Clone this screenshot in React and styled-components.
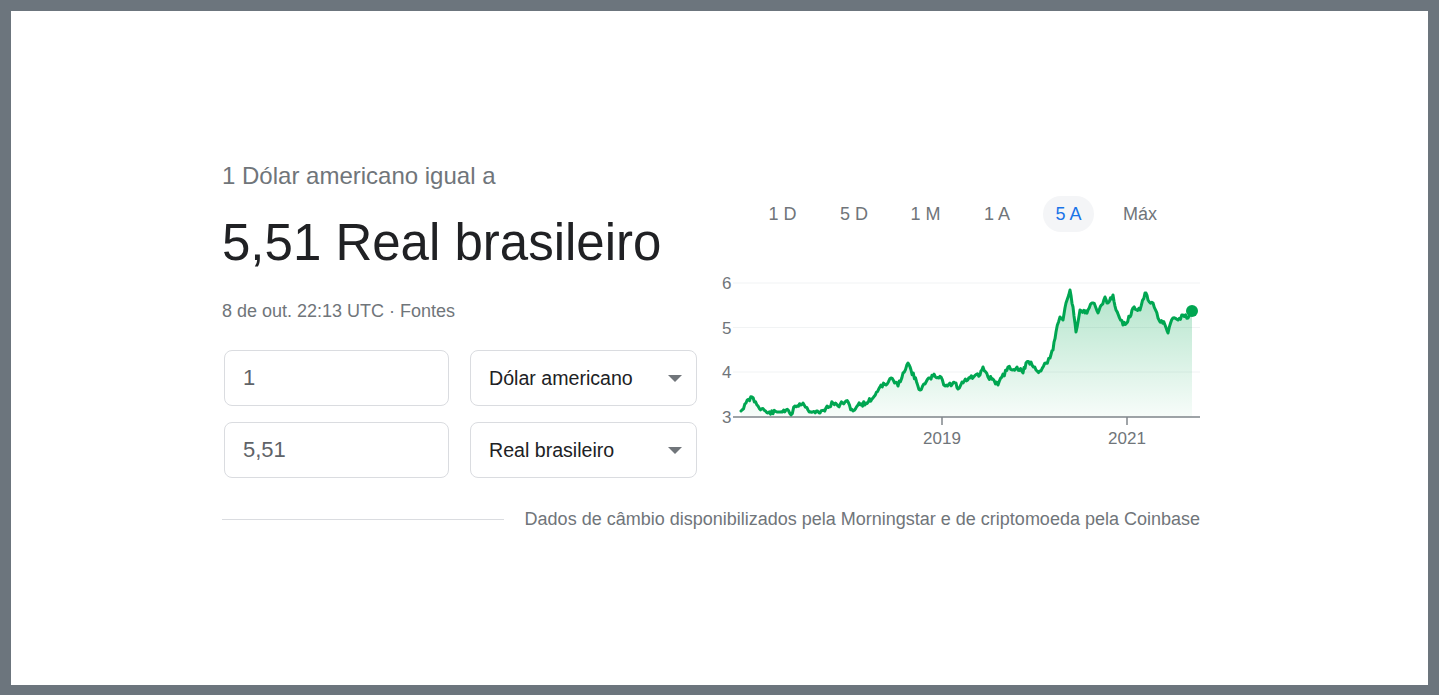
import React from 'react';
import styled, { createGlobalStyle } from 'styled-components';

const GlobalStyle = createGlobalStyle`
  html, body {
    margin: 0;
    padding: 0;
    background: #6c757d;
  }
  body {
    font-family: "Liberation Sans", Arial, sans-serif;
  }
`;

const Frame = styled.div`
  box-sizing: border-box;
  height: 695px;
  padding: 11px 11px 10px 11px;
  background: #6c757d;
`;

const Page = styled.div`
  height: 100%;
  background: #ffffff;
  padding: 151px 0 0 211px;
  box-sizing: border-box;
`;

const Card = styled.div`
  width: 978px;
`;

const TopRow = styled.div`
  display: flex;
  align-items: flex-start;
`;

const LeftCol = styled.div`
  width: 478px;
  flex: none;
`;

const Label = styled.div`
  font-size: 24px;
  line-height: 28px;
  color: #70757a;
`;

const BigValue = styled.div`
  margin-top: 23px;
  font-size: 51px;
  line-height: 60px;
  color: #202124;
  white-space: nowrap;
`;

const Meta = styled.div`
  margin-top: 27px;
  font-size: 18px;
  line-height: 22px;
  color: #70757a;
`;

const Converter = styled.div`
  margin-top: 28px;
  padding-left: 2px;
  display: grid;
  grid-template-columns: 225px 227px;
  grid-auto-rows: 56px;
  gap: 16px 21px;
`;

const Field = styled.div`
  box-sizing: border-box;
  border: 1px solid #dadce0;
  border-radius: 8px;
  display: flex;
  align-items: center;
  padding: 0 14px 0 18px;
  font-size: ${p => (p.select ? '19.6px' : '22px')};
  color: ${p => (p.select ? '#202124' : '#5f6368')};
  justify-content: space-between;
  white-space: nowrap;
`;

const Caret = styled.span`
  width: 0;
  height: 0;
  border-left: 7px solid transparent;
  border-right: 7px solid transparent;
  border-top: 7px solid #70757a;
`;

const ChartCol = styled.div`
  width: 500px;
  margin-top: 34px;
`;

const Tabs = styled.div`
  display: flex;
  gap: 20.5px;
  padding-left: 57px;
`;

const Tab = styled.div`
  width: 51px;
  height: 36px;
  border-radius: 18px;
  display: flex;
  align-items: center;
  justify-content: center;
  font-size: 18px;
  color: ${p => (p.active ? '#1a73e8' : '#70757a')};
  background: ${p => (p.active ? '#f4f5f7' : 'transparent')};
  white-space: nowrap;
`;

const ChartSvg = styled.svg`
  display: block;
  margin-top: 38px;
  overflow: visible;
`;

const Footer = styled.div`
  margin-top: 30px;
  display: flex;
  align-items: center;
  gap: 21px;
`;

const Rule = styled.div`
  flex: 1;
  height: 1px;
  background: #dadce0;
`;

const Source = styled.div`
  font-size: 18px;
  line-height: 22px;
  color: #70757a;
  white-space: nowrap;
`;

const KEY = [
  [741, 411], [746, 403], [752, 397], [758, 406], [768, 413], [778, 412], [786, 410], [791, 415],
  [795, 406], [803, 403], [808, 410], [820, 413], [833, 403], [838, 406], [846, 401], [853, 411],
  [858, 405], [866, 403], [873, 398], [881, 385], [886, 385], [891, 378], [898, 386], [903, 373],
  [908, 363], [911, 370], [920, 390], [930, 378], [933, 376], [941, 377], [945, 386], [956, 383],
  [958, 389], [962, 382], [970, 378], [980, 375], [983, 367], [988, 377], [993, 379], [998, 385],
  [1008, 367], [1012, 370], [1017, 367], [1023, 373], [1026, 363], [1031, 362], [1036, 370],
  [1041, 371], [1046, 363], [1050, 358], [1053, 350], [1056, 332], [1060, 317], [1063, 320],
  [1066, 303], [1070, 290], [1073, 307], [1076, 332], [1080, 310], [1085, 313], [1088, 310],
  [1093, 303], [1098, 313], [1105, 297], [1108, 303], [1113, 295], [1116, 310], [1123, 325],
  [1130, 317], [1133, 308], [1140, 310], [1145, 293], [1148, 300], [1153, 303], [1158, 318],
  [1165, 325], [1168, 333], [1173, 318], [1178, 320], [1183, 315], [1188, 318], [1192, 311],
];

// small seeded jitter so the line looks like daily prices
function buildLine() {
  let seed = 11;
  const rnd = () => {
    seed = (seed * 9301 + 49297) % 233280;
    return seed / 233280;
  };
  const pts = [];
  for (let i = 0; i < KEY.length - 1; i++) {
    const [x0, y0] = KEY[i];
    const [x1, y1] = KEY[i + 1];
    const steps = Math.max(1, Math.round((x1 - x0) / 1.2));
    for (let s = 0; s < steps; s++) {
      const t = s / steps;
      const jitter = s === 0 ? 0 : (rnd() - 0.5) * 4.5;
      pts.push([x0 + (x1 - x0) * t - 700, y0 + (y1 - y0) * t + jitter - 270]);
    }
  }
  const last = KEY[KEY.length - 1];
  pts.push([last[0] - 700, last[1] - 270]);
  return pts;
}

const LINE = buildLine();
const LINE_D = LINE.map((p, i) => `${i ? 'L' : 'M'}${p[0].toFixed(1)},${p[1].toFixed(1)}`).join(' ');
const AREA_D = `${LINE_D} L${LINE[LINE.length - 1][0]},147 L${LINE[0][0]},147 Z`;

const GRID = [
  { v: '6', y: 13 },
  { v: '5', y: 57.5 },
  { v: '4', y: 102 },
  { v: '3', y: 147 },
];

const AXIS_FONT = 'Liberation Sans, Arial, sans-serif';

const Chart = () => (
  <ChartSvg width="500" height="180" viewBox="0 0 500 180">
    <defs>
      <linearGradient id="fillGrad" x1="0" y1="0" x2="0" y2="1">
        <stop offset="0%" stopColor="#00a651" stopOpacity="0.3" />
        <stop offset="100%" stopColor="#00a651" stopOpacity="0.03" />
      </linearGradient>
    </defs>
    {GRID.map(g => (
      <g key={g.v}>
        <line x1="33" x2="500" y1={g.y} y2={g.y} stroke="#f1f3f4" strokeWidth="1" />
        <text x="22" y={g.y + 6} fontSize="17" fill="#70757a" fontFamily={AXIS_FONT}>
          {g.v}
        </text>
      </g>
    ))}
    <path d={AREA_D} fill="url(#fillGrad)" />
    <line x1="33" x2="500" y1="147" y2="147" stroke="#80868b" strokeWidth="1.5" />
    <line x1="242" x2="242" y1="147" y2="155" stroke="#80868b" strokeWidth="1.5" />
    <line x1="427" x2="427" y1="147" y2="155" stroke="#80868b" strokeWidth="1.5" />
    <text x="242" y="174" textAnchor="middle" fontSize="17" fill="#70757a" fontFamily={AXIS_FONT}>2019</text>
    <text x="427" y="174" textAnchor="middle" fontSize="17" fill="#70757a" fontFamily={AXIS_FONT}>2021</text>
    <path d={LINE_D} fill="none" stroke="#00a651" strokeWidth="3" strokeLinejoin="round" strokeLinecap="round" />
    <circle cx="492" cy="41" r="6" fill="#00a651" />
  </ChartSvg>
);

const TABS = ['1 D', '5 D', '1 M', '1 A', '5 A', 'Máx'];

export default function App() {
  return (
    <>
      <GlobalStyle />
      <Frame>
        <Page>
          <Card>
            <TopRow>
              <LeftCol>
                <Label>1 Dólar americano igual a</Label>
                <BigValue>5,51 Real brasileiro</BigValue>
                <Meta>8 de out. 22:13 UTC · Fontes</Meta>
                <Converter>
                  <Field>1</Field>
                  <Field select>
                    Dólar americano
                    <Caret />
                  </Field>
                  <Field>5,51</Field>
                  <Field select>
                    Real brasileiro
                    <Caret />
                  </Field>
                </Converter>
              </LeftCol>
              <ChartCol>
                <Tabs>
                  {TABS.map(t => (
                    <Tab key={t} active={t === '5 A'}>{t}</Tab>
                  ))}
                </Tabs>
                <Chart />
              </ChartCol>
            </TopRow>
            <Footer>
              <Rule />
              <Source>Dados de câmbio disponibilizados pela Morningstar e de criptomoeda pela Coinbase</Source>
            </Footer>
          </Card>
        </Page>
      </Frame>
    </>
  );
}
